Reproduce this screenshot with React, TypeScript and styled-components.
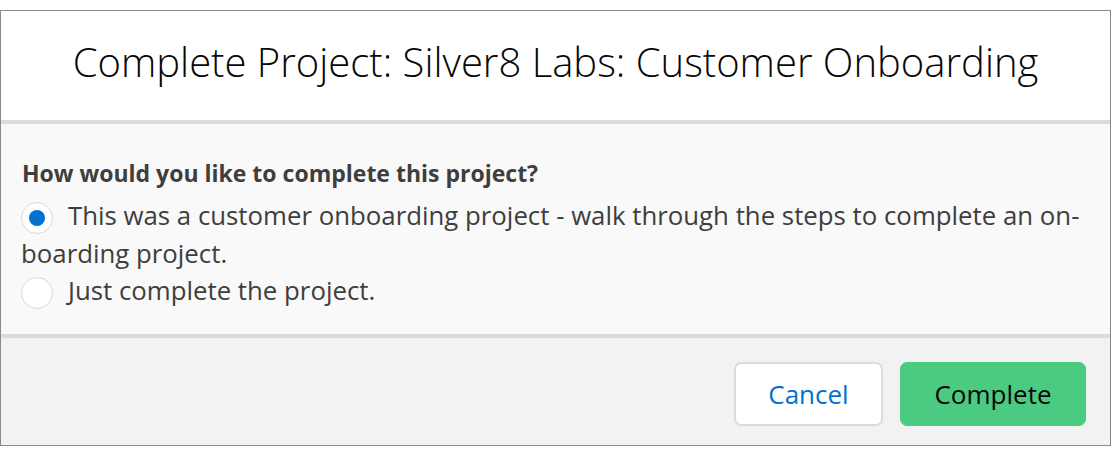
import React from "react";
import styled, { createGlobalStyle } from "styled-components";

const Global = createGlobalStyle`
  html, body { margin: 0; padding: 0; background: #ffffff; }
  body { font-family: "Open Sans", "Liberation Sans", sans-serif; }
  * { box-sizing: border-box; }
`;

const Page = styled.div`
  padding-top: 10px;
`;

const Modal = styled.div`
  width: 1111px;
  height: 436px;
  border: 1px solid #8a8a8a;
  display: flex;
  flex-direction: column;
  background: #f9f9f9;
`;

const Header = styled.header`
  height: 113px;
  flex: none;
  background: #ffffff;
  border-bottom: 4px solid #dddbda;
  display: flex;
  align-items: flex-start;
  justify-content: center;
  padding-top: 31px;
`;

const Title = styled.h2`
  margin: 0;
  font-family: "Open Sans", sans-serif;
  font-weight: 300;
  font-size: 40px;
  line-height: 40px;
  color: #080707;
  white-space: nowrap;
`;

const Body = styled.section`
  flex: none;
  height: 214px;
  background: #f9f9f9;
  border-bottom: 4px solid #dddbda;
  padding: 35px 8px 0 20px;
`;

const Question = styled.div`
  font-size: 23px;
  font-weight: 700;
  color: #3e3e3c;
  line-height: 28px;
  margin-bottom: 10px;
  padding-left: 1px;
`;

const Option = styled.label`
  display: block;
  font-size: 25.8px;
  color: #3e3e3c;
  line-height: 37.5px;
  white-space: nowrap;
`;

const RadioCircle = styled.span<{ $checked?: boolean }>`
  display: inline-block;
  vertical-align: middle;
  width: 32px;
  height: 32px;
  border-radius: 50%;
  border: 1px solid #d8d8d8;
  background: #ffffff;
  margin-right: 15px;
  position: relative;
  &::after {
    content: "";
    display: ${(p) => (p.$checked ? "block" : "none")};
    position: absolute;
    left: 7px;
    top: 7px;
    width: 16px;
    height: 16px;
    border-radius: 50%;
    background: #0070d2;
  }
`;

const Footer = styled.footer`
  flex: 1;
  background: #f3f2f2;
  display: flex;
  justify-content: flex-end;
  align-items: flex-start;
  gap: 17px;
  padding: 24px 24px 0 0;
`;

const Button = styled.button<{ $primary?: boolean }>`
  height: 64px;
  border-radius: 7px;
  font-family: "Open Sans", sans-serif;
  font-size: 26px;
  font-weight: 400;
  padding: 0;
  cursor: pointer;
  background: ${(p) => (p.$primary ? "#4bca81" : "#ffffff")};
  color: ${(p) => (p.$primary ? "#080707" : "#0070d2")};
  border: ${(p) => (p.$primary ? "1px solid #4bca81" : "2px solid #dddbda")};
  width: ${(p) => (p.$primary ? "186px" : "149px")};
`;

export default function App() {
  return (
    <>
      <Global />
      <Page>
        <Modal>
          <Header>
            <Title>Complete Project: Silver8 Labs: Customer Onboarding</Title>
          </Header>
          <Body>
            <Question>How would you like to complete this project?</Question>
            <Option>
              <RadioCircle $checked />
              This was a customer onboarding project - walk through the steps to complete an on-
              <br />
              boarding project.
            </Option>
            <Option>
              <RadioCircle />
              Just complete the project.
            </Option>
          </Body>
          <Footer>
            <Button>Cancel</Button>
            <Button $primary>Complete</Button>
          </Footer>
        </Modal>
      </Page>
    </>
  );
}
